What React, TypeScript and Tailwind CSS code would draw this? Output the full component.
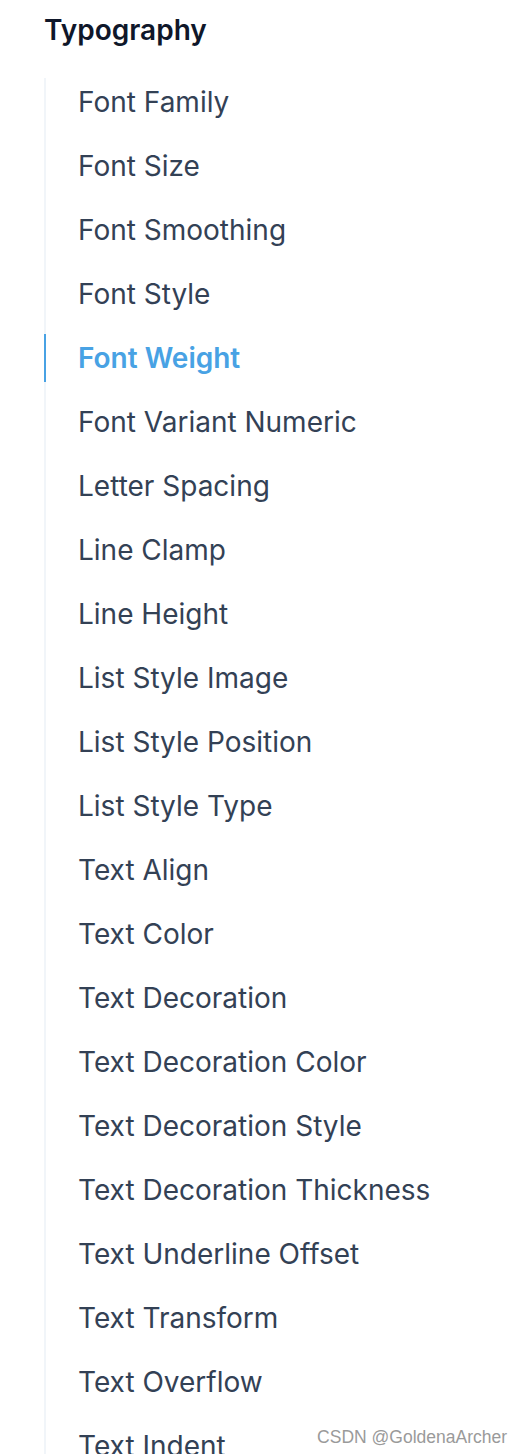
import React from "react";

const items = [
  "Font Family",
  "Font Size",
  "Font Smoothing",
  "Font Style",
  "Font Weight",
  "Font Variant Numeric",
  "Letter Spacing",
  "Line Clamp",
  "Line Height",
  "List Style Image",
  "List Style Position",
  "List Style Type",
  "Text Align",
  "Text Color",
  "Text Decoration",
  "Text Decoration Color",
  "Text Decoration Style",
  "Text Decoration Thickness",
  "Text Underline Offset",
  "Text Transform",
  "Text Overflow",
  "Text Indent",
  "Vertical Align",
  "Whitespace",
];

export default function App() {
  return (
    <div className="relative h-[1454px] w-[522px] overflow-hidden bg-white font-['Inter',sans-serif]">
      <div className="pl-[44px] pt-[6px]">
        <h5 className="mb-[24px] text-[28px] leading-[48px] font-semibold text-[#0f172a]">
          Typography
        </h5>
        <ul className="flex flex-col gap-[16px] border-l-2 border-[#f1f5f9]">
          {items.map((it) => {
            const active = it === "Font Weight";
            return (
              <li key={it}>
                <a
                  className={
                    active
                      ? "-ml-[2px] block border-l-2 border-[#48a2e4] pl-[32px] text-[28px] leading-[48px] font-semibold text-[#48a2e4]"
                      : "-ml-[2px] block border-l-2 border-transparent pl-[32px] text-[28px] leading-[48px] font-normal text-[#334155]"
                  }
                >
                  {it}
                </a>
              </li>
            );
          })}
        </ul>
      </div>
      <div className="absolute right-[15px] top-[1426px] font-['Liberation_Sans',sans-serif] text-[17.5px] leading-[22px] text-[#9a9a9a]">
        CSDN @GoldenaArcher
      </div>
    </div>
  );
}
